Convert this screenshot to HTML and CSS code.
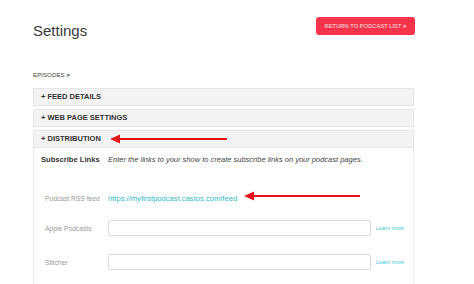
FILE: index.html
```html
<!DOCTYPE html>
<html lang="en">

<head>
    <meta charset="UTF-8">
    <title>Settings</title>
    <link rel="stylesheet" href="styles.css">
</head>

<body>

    <div class="page">
        <div class="top">
            <h1>Settings</h1>
            <button class="back">RETURN TO PODCAST LIST <b>&gt;</b></button>
        </div>

        <div class="crumbs">EPISODES <b>&gt;</b></div>

        <div class="sec">+ FEED DETAILS</div>
        <div class="sec">+ WEB PAGE SETTINGS</div>
        <div class="sec open">+ DISTRIBUTION</div>

        <div class="sec-body">
            <div class="intro">
                <span class="intro-label">Subscribe Links</span>
                <span class="intro-text">Enter the links to your show to create subscribe links on your podcast pages.</span>
            </div>

            <div class="field rss">
                <label>Podcast RSS feed</label>
                <a href="#" class="feed">https://myfirstpodcast.castos.com/feed</a>
            </div>

            <div class="field apple">
                <label>Apple Podcasts</label>
                <input type="text">
                <a href="#" class="more">Learn more</a>
            </div>

            <div class="field stitcher">
                <label>Stitcher</label>
                <input type="text">
                <a href="#" class="more">Learn more</a>
            </div>
        </div>
    </div>

    <!-- annotation arrows -->
    <svg class="arrows" width="474" height="284" viewBox="0 0 474 284">
        <line x1="117" y1="139" x2="227" y2="139" stroke="#e3121b" stroke-width="2" />
        <polygon points="110,139 120,134.5 120,143.5" fill="#e3121b" />
        <line x1="251" y1="196" x2="360" y2="196" stroke="#e3121b" stroke-width="2" />
        <polygon points="244,196 254,191.5 254,200.5" fill="#e3121b" />
    </svg>

</body>

</html>
```

FILE: styles.css
```css
html {
    overflow: hidden;
}

body {
    margin: 0;
    font-family: "Liberation Sans", Arial, sans-serif;
    color: #333;
    background: #fff;
}

.page {
    width: 381px;
    padding: 17px 0 0 33px;
}

.top {
    display: flex;
    justify-content: space-between;
    align-items: flex-start;
}

h1 {
    margin: 5px 0 0 0;
    font-size: 15px;
    line-height: 18px;
    font-weight: normal;
    color: #3a3a3a;
}

.back {
    width: 99px;
    height: 18px;
    margin-right: -1px;
    padding: 0;
    border: none;
    border-radius: 3px;
    background: #f5344c;
    color: #fde4e7;
    font-family: "Liberation Sans", Arial, sans-serif;
    font-size: 5.8px;
}

.back b {
    color: #fff;
}

.crumbs {
    margin-top: 30px;
    line-height: 10px;
    font-size: 6.2px;
    color: #444;
}

.crumbs b {
    color: #222;
}

.sec {
    box-sizing: border-box;
    height: 18px;
    margin-top: 3px;
    padding-left: 7px;
    border: 1px solid #e6e6e6;
    background: #f3f3f3;
    font-size: 7.5px;
    font-weight: bold;
    line-height: 16px;
    color: #333;
}

.crumbs + .sec {
    margin-top: 8px;
}

.sec-body {
    height: 130px;
    padding: 6px 0 0 7px;
    border: 1px solid #ececec;
    border-top: none;
    border-bottom: none;
}

.intro {
    display: flex;
    line-height: 12px;
}

.intro-label {
    width: 67px;
    font-size: 7.6px;
    font-weight: bold;
    color: #333;
}

.intro-text {
    font-size: 7.5px;
    font-style: italic;
    color: #444;
}

.field {
    display: flex;
    align-items: center;
    height: 16px;
}

.field label {
    width: 63px;
    padding-left: 4px;
    font-size: 6.7px;
    color: #9a9a9a;
}

.rss {
    margin-top: 24px;
}

.apple {
    margin-top: 14px;
}

.stitcher {
    margin-top: 18px;
}

.feed {
    font-size: 7.6px;
    color: #2fb9c9;
    text-decoration: none;
}

.field input {
    box-sizing: border-box;
    width: 263px;
    height: 16px;
    margin: 0;
    border: 1px solid #dcdcdc;
    border-radius: 2px;
}

.more {
    margin-left: 5px;
    font-size: 5.5px;
    color: #3ec5cf;
    text-decoration: none;
}

.arrows {
    position: absolute;
    top: 0;
    left: 0;
    pointer-events: none;
}
```
